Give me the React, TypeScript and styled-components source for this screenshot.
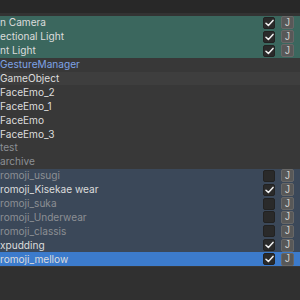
import React from "react";
import styled, { createGlobalStyle } from "styled-components";

const Global = createGlobalStyle`
  html, body { margin: 0; padding: 0; background: #383838; }
  body { width: 300px; height: 300px; overflow: hidden; font-family: Inter, "Noto Sans", sans-serif; }
`;

const Panel = styled.div`
  width: 300px;
  height: 300px;
  display: flex;
  flex-direction: column;
  background: #383838;
  overflow: hidden;
`;

const TopBar = styled.div`
  height: 13px;
  background: #282828;
  border-bottom: 3px solid #333333;
  flex: none;
`;

const List = styled.div`
  display: flex;
  flex-direction: column;
  flex: none;
`;

type Tone = "green" | "slate" | "selected" | "plain" | "alt";

const bg: Record<Tone, string> = {
  green: "#3b675e",
  slate: "#3b4859",
  selected: "#3c7bcc",
  plain: "#383838",
  alt: "#3e3e3e",
};

const Row = styled.div<{ $tone: Tone }>`
  height: 13.9px;
  display: flex;
  align-items: center;
  background: ${(p) => bg[p.$tone]};
  padding-right: 6px;
`;

type TextTone = "normal" | "dim" | "link";
const fg: Record<TextTone, string> = {
  normal: "#dcdcdc",
  dim: "#8c8f94",
  link: "#7ea3e6",
};

const Label = styled.span<{ $tone: TextTone }>`
  flex: 1;
  min-width: 0;
  font-size: 10.1px;
  line-height: 13px;
  color: ${(p) => fg[p.$tone]};
  white-space: nowrap;
  overflow: hidden;
`;

const Check = styled.div`
  flex: none;
  width: 12px;
  height: 12px;
  box-sizing: border-box;
  background: #2a2a2a;
  border: 1px solid #222222;
  border-radius: 2px;
  display: flex;
  align-items: center;
  justify-content: center;
  margin-right: 6px;
`;

const JButton = styled.div`
  flex: none;
  width: 13px;
  height: 13px;
  box-sizing: border-box;
  background: #585858;
  border: 1px solid #676767;
  border-radius: 2px;
  display: flex;
  align-items: center;
  justify-content: center;
  font-family: "Liberation Sans", sans-serif;
  font-size: 10px;
  color: #cfcfcf;
  line-height: 1;
`;

const Bottom = styled.div`
  flex: 1;
  background: #303030;
  margin-top: 1px;
`;

const Tick = () => (
  <svg width="9" height="8" viewBox="0 0 9 8">
    <path d="M1 4.2 L3.4 6.4 L8 1.4" stroke="#f2f2f2" strokeWidth="1.5" fill="none" strokeLinecap="round" strokeLinejoin="round" />
  </svg>
);

type Item = { text: string; tone: Tone; tt: TextTone; toggle?: boolean };

const items: Item[] = [
  { text: "n Camera", tone: "green", tt: "normal", toggle: true },
  { text: "ectional Light", tone: "green", tt: "normal", toggle: true },
  { text: "nt Light", tone: "green", tt: "normal", toggle: true },
  { text: "GestureManager", tone: "plain", tt: "link" },
  { text: "GameObject", tone: "alt", tt: "normal" },
  { text: "FaceEmo_2", tone: "plain", tt: "normal" },
  { text: "FaceEmo_1", tone: "plain", tt: "normal" },
  { text: "FaceEmo", tone: "plain", tt: "normal" },
  { text: "FaceEmo_3", tone: "plain", tt: "normal" },
  { text: "test", tone: "plain", tt: "dim" },
  { text: "archive", tone: "plain", tt: "dim" },
  { text: "romoji_usugi", tone: "slate", tt: "dim", toggle: false },
  { text: "romoji_Kisekae wear", tone: "slate", tt: "normal", toggle: true },
  { text: "romoji_suka", tone: "slate", tt: "dim", toggle: false },
  { text: "romoji_Underwear", tone: "slate", tt: "dim", toggle: false },
  { text: "romoji_classis", tone: "slate", tt: "dim", toggle: false },
  { text: "xpudding", tone: "slate", tt: "normal", toggle: true },
  { text: "romoji_mellow", tone: "selected", tt: "normal", toggle: true },
];

export default function App() {
  return (
    <>
      <Global />
      <Panel>
        <TopBar />
        <List>
          {items.map((it) => (
            <Row key={it.text} $tone={it.tone}>
              <Label $tone={it.tone === "selected" ? "normal" : it.tt}>{it.text}</Label>
              {it.toggle !== undefined && (
                <>
                  <Check>{it.toggle ? <Tick /> : null}</Check>
                  <JButton>J</JButton>
                </>
              )}
            </Row>
          ))}
        </List>
        <Bottom />
      </Panel>
    </>
  );
}
